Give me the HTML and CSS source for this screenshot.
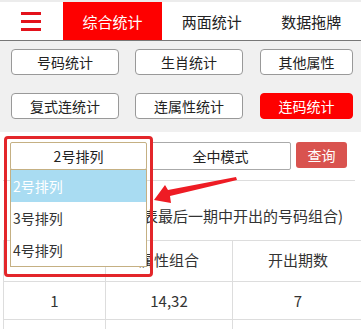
FILE: index.html
```html
<!DOCTYPE html>
<html lang="zh-CN">
<head>
  <meta charset="UTF-8">
  <meta name="viewport" content="width=device-width, initial-scale=1.0">
  <title>连码统计</title>
  <link rel="stylesheet" href="styles.css">
</head>
<body>
  <div class="page">
    <div class="topbar">
      <div class="menu">
        <span></span><span></span><span></span>
      </div>
      <div class="tab active">综合统计</div>
      <div class="tab">两面统计</div>
      <div class="tab">数据拖牌</div>
    </div>

    <div class="subnav">
      <button class="sub-btn">号码统计</button>
      <button class="sub-btn">生肖统计</button>
      <button class="sub-btn">其他属性</button>
      <button class="sub-btn">复式连统计</button>
      <button class="sub-btn">连属性统计</button>
      <button class="sub-btn current">连码统计</button>
    </div>

    <div class="filter">
      <div class="select-wrap">
        <div class="select focus">2号排列</div>
        <ul class="dropdown">
          <li class="hover">2号排列</li>
          <li>3号排列</li>
          <li>4号排列</li>
        </ul>
      </div>
      <div class="select mode">全中模式</div>
      <button class="query">查询</button>
    </div>

    <p class="note">(红色代表最后一期中开出的号码组合)</p>

    <table class="result">
      <tr>
        <th></th>
        <th>属性组合</th>
        <th>开出期数</th>
      </tr>
      <tr>
        <td>1</td>
        <td>14,32</td>
        <td>7</td>
      </tr>
      <tr>
        <td></td>
        <td></td>
        <td></td>
      </tr>
    </table>

    <!-- annotation drawn over the screenshot -->
    <div class="mark-box"></div>
    <svg class="mark-arrow" width="361" height="329" viewBox="0 0 361 329">
      <polygon points="154,200 165,185 168,190 236,177 237,180 170,196 171,203" fill="#ee1c24"/>
    </svg>
  </div>
</body>
</html>
```

FILE: styles.css
```css
body {
  margin: 0;
  font-family: "Noto Sans CJK SC", "Noto Sans", sans-serif;
  color: #222;
  background: #fff;
}

.page {
  position: relative;
  width: 361px;
  height: 329px;
  overflow: hidden;
}

/* top navigation */
.topbar {
  display: flex;
  height: 38px;
  border-top: 2px solid #ececec;
  border-bottom: 1px solid #777;
  background: #fff;
}

.menu {
  width: 63px;
  display: flex;
  flex-direction: column;
  justify-content: center;
  align-items: center;
  gap: 5px;
}

.menu span {
  display: block;
  width: 20px;
  height: 3px;
  background: #e3121b;
}

.tab {
  width: 100px;
  display: flex;
  align-items: center;
  justify-content: center;
  font-size: 15px;
  color: #222;
}

.tab.active {
  background: #fe0000;
  color: #fff;
}

/* sub navigation */
.subnav {
  background: #f0f0f0;
  display: grid;
  grid-template-columns: 108px 108px 94px;
  column-gap: 16px;
  row-gap: 18px;
  padding: 8px 0 13px 11px;
}

.sub-btn {
  height: 26px;
  padding: 0;
  font-family: inherit;
  font-size: 14px;
  color: #222;
  background: #fff;
  border: 1px solid #999;
  border-radius: 4px;
}

.sub-btn:nth-child(3n) {
  margin-left: 1px;
}

.sub-btn.current {
  background: #fe0000;
  border-color: #fe0000;
  color: #fff;
}

/* filter row */
.filter {
  display: flex;
  align-items: flex-start;
  margin: 0 6px 0 3px;
  padding: 10px 0 10px 7px;
  border-bottom: 1px solid #ddd;
}

.select-wrap {
  position: relative;
}

.select {
  box-sizing: border-box;
  height: 28px;
  display: flex;
  align-items: center;
  justify-content: center;
  font-size: 14px;
  color: #222;
  border: 1px solid #aaa;
  border-radius: 2px;
  background: #fff;
}

.select.focus {
  width: 137px;
  border-color: #c5b083;
}

.select.mode {
  width: 141px;
  margin-left: 3px;
}

.query {
  width: 51px;
  height: 26px;
  margin-left: 5px;
  padding: 0;
  font-family: inherit;
  font-size: 14px;
  color: #fff;
  background: #d9534f;
  border: none;
  border-radius: 3px;
}

.dropdown {
  position: absolute;
  top: 27px;
  left: 0;
  width: 137px;
  box-sizing: border-box;
  margin: 0;
  padding: 0;
  list-style: none;
  background: #fff;
  border: 1px solid #c5b083;
  z-index: 2;
}

.dropdown li {
  height: 32px;
  line-height: 32px;
  padding-left: 2px;
  font-size: 14px;
  color: #333;
}

.dropdown li.hover {
  background: #a9dcf2;
  color: #fff;
}

.note {
  margin: 0;
  padding: 24px 18px 13px 0;
  line-height: 22px;
  font-size: 15px;
  color: #333;
  text-align: right;
}

/* result table */
.result {
  margin-left: 3px;
  width: 360px;
  border-collapse: collapse;
  table-layout: fixed;
}

.result th,
.result td {
  height: 37px;
  padding: 0;
  border: 1px solid #ddd;
  text-align: center;
  font-size: 15px;
  font-weight: normal;
  color: #333;
}

.result th {
  padding-bottom: 3px;
}

.result th:nth-child(1) { width: 101px; }
.result th:nth-child(2) { width: 126px; }

.result th:last-child,
.result td:last-child {
  border-right: none;
}

/* annotation overlay */
.mark-box {
  position: absolute;
  left: 4px;
  top: 136px;
  width: 143px;
  height: 135px;
  border: 3px solid #e3262a;
  border-radius: 4px;
  z-index: 3;
}

.mark-arrow {
  position: absolute;
  left: 0;
  top: 0;
  z-index: 3;
}
```
